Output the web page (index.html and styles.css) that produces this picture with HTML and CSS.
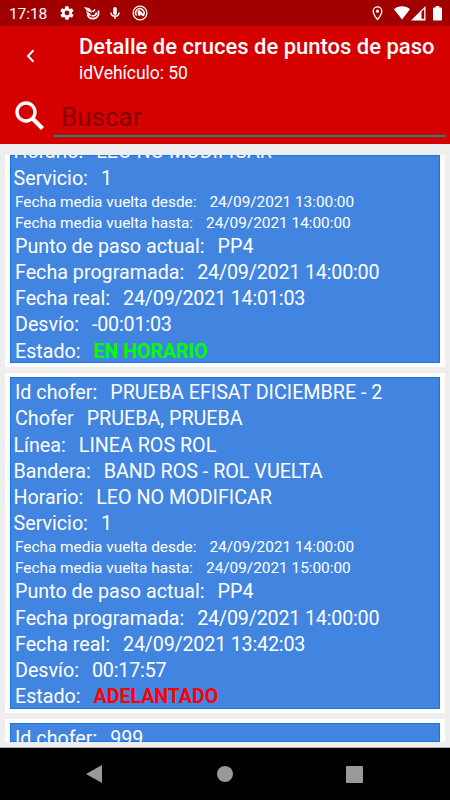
FILE: index.html
```html
<!DOCTYPE html>
<html lang="es">
  <head>
    <meta charset="utf-8">
    <title>Detalle de cruces de puntos de paso</title>
    <link rel="stylesheet" href="styles.css">
  </head>
  <body>
    <div class="statusbar">
      <span class="clock">17:18</span>
      <svg class="gear" width="16" height="16" viewBox="0 0 24 24"><path fill="#fff" fill-rule="evenodd" d="M19.4 13a7.500 7.500 0 0 0 0-2l2.100-1.600c.2-.2.300-.4.100-.7l-2-3.400c-.1-.2-.4-.3-.6-.2l-2.500 1a7.300 7.300 0 0 0-1.700-1l-.4-2.600a.5.5 0 0 0-.5-.5h-4a.5.5 0 0 0-.5.5L9 5.100a7.300 7.300 0 0 0-1.700 1l-2.500-1c-.2-.1-.5 0-.6.2l-2 3.400c-.1.200-.1.500.1.700L4.500 11a7.500 7.500 0 0 0 0 2l-2.100 1.600c-.2.200-.3.400-.1.700l2 3.400c.1.200.4.300.6.200l2.500-1a7.300 7.300 0 0 0 1.700 1l.4 2.600c0 .3.200.5.500.5h4c.300 0 .5-.2.500-.5l.4-2.600a7.300 7.300 0 0 0 1.700-1l2.500 1c.2.100.5 0 .6-.2l2-3.400c.1-.2.1-.5-.1-.7zM12 15.600a3.600 3.600 0 1 1 0-7.200 3.600 3.600 0 0 1 0 7.200z"/></svg>
      <svg class="bird" width="16" height="15" viewBox="0 0 16 15"><path fill="#fff" d="M0 1l5 1 2 2 1 3-2-1-3-1zM2 5l4 2.500 1.500 2.500-4-1z"/><path d="M3.500 8.500C5 14 12.500 14 14.500 8.500V4.500M7.500 9.500c2.500 1.200 4.500-.5 5-3M8.500 6L11 3.500" fill="none" stroke="#fff" stroke-width="1.700"/></svg>
      <svg class="mic" width="10" height="13" viewBox="0 0 10 13"><rect x="3.200" y="0" width="3.600" height="8" rx="1.800" fill="#fff"/><path d="M1 5.500c0 5 8 5 8 0M5 9.500V12" fill="none" stroke="#fff" stroke-width="1.400"/></svg>
      <svg class="privacy" width="16" height="16" viewBox="0 0 16 16"><circle cx="8" cy="8" r="6.900" fill="none" stroke="#fff" stroke-width="1.300"/><path d="M4.600 10.500A4.200 4.200 0 1 1 11.500 10" fill="none" stroke="#fff" stroke-width="1.500"/><path d="M5.500 6l2-1 5 5-1.300 1.600L8.500 9.500l-.5 1.700-2-1z" fill="#fff"/></svg>
      <svg class="pin" width="11" height="15" viewBox="0 0 11 15"><path d="M5.500 13.500C3 10.500 1.200 8 1.200 5.200a4.300 4.300 0 0 1 8.600 0c0 2.800-1.800 5.300-4.300 8.300z" fill="none" stroke="#fff" stroke-width="1.300"/><circle cx="5.500" cy="5.200" r="1.600" fill="#fff"/></svg>
      <svg class="wifi" width="16" height="14" viewBox="0 0 16 14"><path d="M0 3.200C4.500-.6 11.500-.6 16 3.200L8 13.500z" fill="#fff"/></svg>
      <svg class="signal" width="15" height="15" viewBox="0 0 15 15"><path d="M14.500 0v14.500H0z" fill="#fff"/><path d="M10.500 5.700L13.200 3v9.800h-2.700z" fill="#a00000"/></svg>
      <svg class="battery" width="9" height="15" viewBox="0 0 9 15"><path d="M2.700 0h3.600v1.500H8a1 1 0 0 1 1 1V13.500a1 1 0 0 1-1 1H1a1 1 0 0 1-1-1V2.500a1 1 0 0 1 1-1h1.700z" fill="#fff"/></svg>
    </div>

    <header class="appbar">
      <div class="toolbar">
        <svg class="back" width="9" height="14" viewBox="0 0 9 14"><path d="M7.500 1.300L2 7l5.500 5.700" fill="none" stroke="#fff" stroke-width="2"/></svg>
        <div class="titles">
          <h1>Detalle de cruces de puntos de paso</h1>
          <p>idVehículo: 50</p>
        </div>
      </div>
      <div class="search">
        <svg class="lens" width="30" height="30" viewBox="0 0 30 30"><circle cx="11" cy="11" r="9" fill="none" stroke="#fff" stroke-width="3.400"/><path d="M17.500 17.500L27.500 27.500" stroke="#fff" stroke-width="4.200"/></svg>
        <input class="search-input" type="text" placeholder="Buscar">
      </div>
    </header>

    <main class="list">
      <div class="card first">
        <p class="row shift"><span>Horario:</span><span>LEO NO MODIFICAR</span></p>
        <p class="row shift"><span>Servicio:</span><span>1</span></p>
        <p class="row small"><span>Fecha media vuelta desde:</span><span>24/09/2021 13:00:00</span></p>
        <p class="row small"><span>Fecha media vuelta hasta:</span><span>24/09/2021 14:00:00</span></p>
        <p class="row"><span>Punto de paso actual:</span><span>PP4</span></p>
        <p class="row"><span>Fecha programada:</span><span class="time">24/09/2021 14:00:00</span></p>
        <p class="row"><span>Fecha real:</span><span class="time">24/09/2021 14:01:03</span></p>
        <p class="row"><span>Desvío:</span><span class="time">-00:01:03</span></p>
        <p class="row"><span>Estado:</span><span class="state on-time">EN HORARIO</span></p>
      </div>
      <div class="card">
        <p class="row"><span>Id chofer:</span><span>PRUEBA EFISAT DICIEMBRE - 2</span></p>
        <p class="row"><span>Chofer</span><span>PRUEBA, PRUEBA</span></p>
        <p class="row shift"><span>Línea:</span><span>LINEA ROS ROL</span></p>
        <p class="row shift"><span>Bandera:</span><span>BAND ROS - ROL VUELTA</span></p>
        <p class="row shift"><span>Horario:</span><span>LEO NO MODIFICAR</span></p>
        <p class="row shift"><span>Servicio:</span><span>1</span></p>
        <p class="row small"><span>Fecha media vuelta desde:</span><span>24/09/2021 14:00:00</span></p>
        <p class="row small"><span>Fecha media vuelta hasta:</span><span>24/09/2021 15:00:00</span></p>
        <p class="row"><span>Punto de paso actual:</span><span>PP4</span></p>
        <p class="row"><span>Fecha programada:</span><span class="time">24/09/2021 14:00:00</span></p>
        <p class="row"><span>Fecha real:</span><span class="time">24/09/2021 13:42:03</span></p>
        <p class="row"><span>Desvío:</span><span class="time">00:17:57</span></p>
        <p class="row"><span>Estado:</span><span class="state early">ADELANTADO</span></p>
      </div>
      <div class="card last">
        <p class="row"><span>Id chofer:</span><span>999</span></p>
      </div>
    </main>

    <nav class="navbar">
      <svg width="16" height="18" viewBox="0 0 16 18"><path d="M16 0v18L0 9z" fill="#999"/></svg>
      <svg class="home" width="16" height="16" viewBox="0 0 16 16"><circle cx="8" cy="8" r="8" fill="#999"/></svg>
      <svg width="17" height="17" viewBox="0 0 17 17"><rect width="17" height="17" rx="1" fill="#999"/></svg>
    </nav>
  </body>
</html>
```
FILE: styles.css
```css
* {
  box-sizing: border-box;
}
body {
  margin: 0;
  width: 450px;
  height: 800px;
  display: flex;
  flex-direction: column;
  overflow: hidden;
  background-color: #eeeeee;
  color: white;
  font-family: Roboto, sans-serif;
}
h1, p {
  margin: 0;
  white-space: nowrap;
}
svg {
  display: block;
  flex: none;
}

/* status bar */
.statusbar {
  height: 26px;
  flex: none;
  display: flex;
  align-items: center;
  padding: 0 8px 0 9px;
  background-color: #a00000;
}
.clock {
  width: 50px;
  font-size: 15.5px;
  letter-spacing: -0.1px;
  line-height: 26px;
  padding-top: 2px;
}
.bird {
  margin-left: 9px;
}
.mic {
  margin-left: 10px;
}
.privacy {
  margin-left: 12px;
}
.pin {
  margin-left: auto;
}
.wifi {
  margin-left: 11px;
}
.signal {
  margin-left: 1px;
}
.battery {
  margin-left: 7px;
}

/* app bar */
.appbar {
  height: 118px;
  flex: none;
  background-color: #d50000;
}
.toolbar {
  height: 62px;
  display: flex;
}
.back {
  margin: 23px 0 0 26px;
}
.titles {
  padding: 7px 0 0 44px;
}
.titles h1 {
  font-size: 22px;
  line-height: 27px;
  font-weight: 500;
}
.titles p {
  font-size: 17.5px;
  letter-spacing: -0.05px;
  line-height: 27px;
}
.search {
  display: flex;
  padding: 0 4px 0 15px;
}
.lens {
  margin-top: 12.6px;
}
.search-input {
  flex: 1;
  min-width: 0;
  height: 43px;
  margin: 6px 0 0 9px;
  padding: 5px 8px 0 7px;
  border: 0;
  border-bottom: 2px solid #128a7e;
  outline: 0;
  background: none;
  color: white;
  font-family: inherit;
  font-size: 26px;
}
.search-input::placeholder {
  color: #850000;
  opacity: 1;
}

/* list of crossings */
.list {
  flex: none;
  height: 587px;
  margin: 11px 5px 5px;
  overflow: hidden;
}
.card {
  height: 340px;
  margin-bottom: 6px;
  padding-top: 3.2px;
  border: solid white;
  border-width: 4px 5px;
  background-color: #4285e0;
  box-shadow: inset 0 0 0 1px #1577df;
  overflow: hidden;
}
.first {
  height: 212px;
  padding-top: 0;
  border-top: 0;
}
.first .row:first-child {
  margin-top: -15.6px;
}
.last {
  height: 23px;
  margin-bottom: 0;
  border-bottom: 0;
}
.row {
  height: 26.2px;
  padding-left: 5px;
  font-size: 19.7px;
  line-height: 26.2px;
}
.row span + span {
  margin-left: 13px;
}
.shift {
  padding-left: 3.5px;
}
.small {
  height: 21px;
  font-size: 15.4px;
  line-height: 21px;
}
.small span {
  letter-spacing: -0.02px;
}
.time {
  letter-spacing: -0.18px;
}
.state {
  font-weight: bold;
  letter-spacing: -0.1px;
}
.on-time {
  color: #00ff00;
}
.early {
  color: #ff0000;
}

/* system navigation */
.navbar {
  flex: 1;
  display: flex;
  justify-content: space-between;
  align-items: center;
  padding: 0 87px 0 86px;
  border-top: 1px solid #aaaaaa;
  background-color: black;
}
.home {
  margin-left: 2px;
}
```
